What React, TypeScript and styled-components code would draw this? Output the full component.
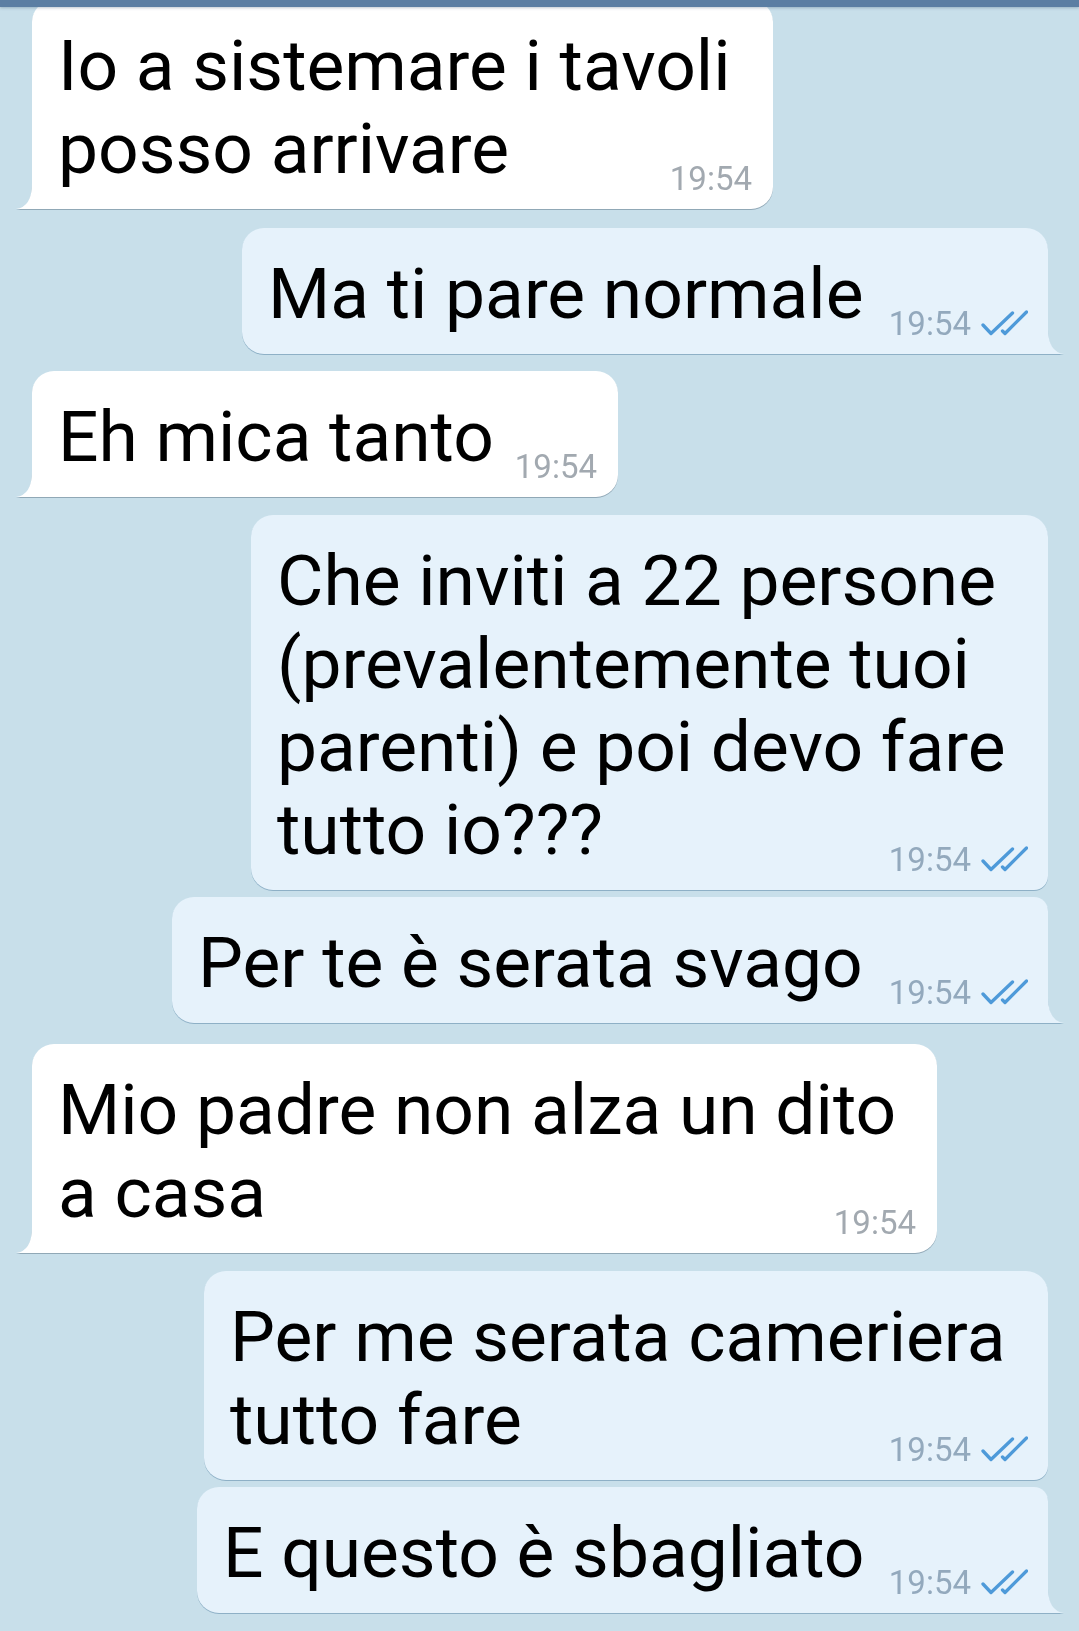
import React from "react";
import styled, { createGlobalStyle } from "styled-components";

const GlobalStyle = createGlobalStyle`
  html, body {
    margin: 0;
    padding: 0;
    background: #c8dfea;
  }
  body {
    font-family: Roboto, "Noto Sans", "Liberation Sans", sans-serif;
    -webkit-font-smoothing: antialiased;
  }
`;

const Page = styled.main`
  min-height: 100vh;
  box-sizing: border-box;
  background: #c8dfea;
  padding: 0 31px 18px 32px;
  display: flex;
  flex-direction: column;
`;

const AppBarEdge = styled.div`
  position: fixed;
  top: 0;
  left: 0;
  right: 0;
  height: 7px;
  background: #5b7ea3;
  box-shadow: 0 1px 3px rgba(40, 70, 100, 0.3);
  z-index: 2;
`;

const Row = styled.div<{ $out: boolean; $gap: number }>`
  display: flex;
  justify-content: ${(p) => (p.$out ? "flex-end" : "flex-start")};
  margin-top: ${(p) => p.$gap}px;
`;

const Bubble = styled.div<{
  $out: boolean;
  $width: number;
  $tail: boolean;
  $groupTop: boolean;
  $groupBottom: boolean;
}>`
  position: relative;
  box-sizing: border-box;
  width: ${(p) => p.$width}px;
  padding: 24px 20px 19px 26px;
  background: ${(p) => (p.$out ? "#e6f2fb" : "#ffffff")};
  border-radius: ${(p) =>
    p.$out
      ? `22px ${p.$groupTop ? 14 : 22}px ${p.$tail ? 0 : p.$groupBottom ? 14 : 22}px 22px`
      : `22px 22px 22px ${p.$tail ? 0 : 22}px`};
  filter: ${(p) =>
    p.$out
      ? "drop-shadow(0 1px 0.6px rgba(70, 120, 155, 0.45))"
      : "drop-shadow(0 1px 0.6px rgba(60, 85, 105, 0.4))"};
  display: grid;
`;

const Text = styled.div`
  grid-area: 1 / 1;
  font-size: 71.3px;
  line-height: 83px;
  color: #000;
  white-space: nowrap;
`;

const Meta = styled.div<{ $out: boolean }>`
  grid-area: 1 / 1;
  justify-self: end;
  align-self: end;
  display: flex;
  align-items: flex-end;
  margin-bottom: -5px;
  margin-right: ${(p) => (p.$out ? 0 : 1)}px;
  font-size: 33px;
  line-height: 33px;
  color: ${(p) => (p.$out ? "#93a9bd" : "#a2a9b0")};
`;

const Checks = styled.svg`
  width: 47px;
  height: 26px;
  margin-left: 10px;
  margin-bottom: 4px;
  flex: none;
`;

const Tail = styled.svg<{ $out: boolean }>`
  position: absolute;
  bottom: 0;
  ${(p) => (p.$out ? "right: -16px;" : "left: -16px;")}
  width: 22px;
  height: 26px;
`;

type Msg = {
  out: boolean;
  lines: string[];
  width: number;
  gap: number;
  tail: boolean;
  groupTop?: boolean;
  groupBottom?: boolean;
};

const messages: Msg[] = [
  { out: false, lines: ["Io a sistemare i tavoli", "posso arrivare"], width: 741, gap: 0, tail: true },
  { out: true, lines: ["Ma ti pare normale"], width: 806, gap: 19, tail: true },
  { out: false, lines: ["Eh mica tanto"], width: 586, gap: 17, tail: true },
  {
    out: true,
    lines: ["Che inviti a 22 persone", "(prevalentemente tuoi", "parenti) e poi devo fare", "tutto io???"],
    width: 797,
    gap: 18,
    tail: false,
    groupBottom: true,
  },
  { out: true, lines: ["Per te è serata svago"], width: 876, gap: 7, tail: true, groupTop: true },
  { out: false, lines: ["Mio padre non alza un dito", "a casa"], width: 905, gap: 21, tail: true },
  {
    out: true,
    lines: ["Per me serata cameriera", "tutto fare"],
    width: 844,
    gap: 18,
    tail: false,
    groupBottom: true,
  },
  { out: true, lines: ["E questo è sbagliato"], width: 851, gap: 7, tail: true, groupTop: true },
];

function DoubleCheck() {
  return (
    <Checks viewBox="0 0 47 26" fill="none" stroke="#4e9ad9" strokeWidth={3.3} strokeLinecap="round" strokeLinejoin="round">
      <path d="M2 15 L10 23.5 L31.5 3" />
      <path d="M21.5 21 L24 23.5 L45.5 2" />
    </Checks>
  );
}

function BubbleTail({ out, color }: { out: boolean; color: string }) {
  return (
    <Tail $out={out} viewBox="0 0 22 26">
      {out ? (
        <path d="M6 0 Q6 24 22 26 L0 26 L0 0 Z" fill={color} />
      ) : (
        <path d="M16 0 Q16 24 0 26 L22 26 L22 0 Z" fill={color} />
      )}
    </Tail>
  );
}

export default function App() {
  return (
    <>
      <GlobalStyle />
      <AppBarEdge />
      <Page>
        {messages.map((m, i) => (
          <Row key={i} $out={m.out} $gap={m.gap}>
            <Bubble
              $out={m.out}
              $width={m.width}
              $tail={m.tail}
              $groupTop={!!m.groupTop}
              $groupBottom={!!m.groupBottom}
            >
              <Text>
                {m.lines.map((l, j) => (
                  <React.Fragment key={j}>
                    {j > 0 && <br />}
                    {l}
                  </React.Fragment>
                ))}
              </Text>
              <Meta $out={m.out}>
                <span>19:54</span>
                {m.out && <DoubleCheck />}
              </Meta>
              {m.tail && <BubbleTail out={m.out} color={m.out ? "#e6f2fb" : "#ffffff"} />}
            </Bubble>
          </Row>
        ))}
      </Page>
    </>
  );
}
